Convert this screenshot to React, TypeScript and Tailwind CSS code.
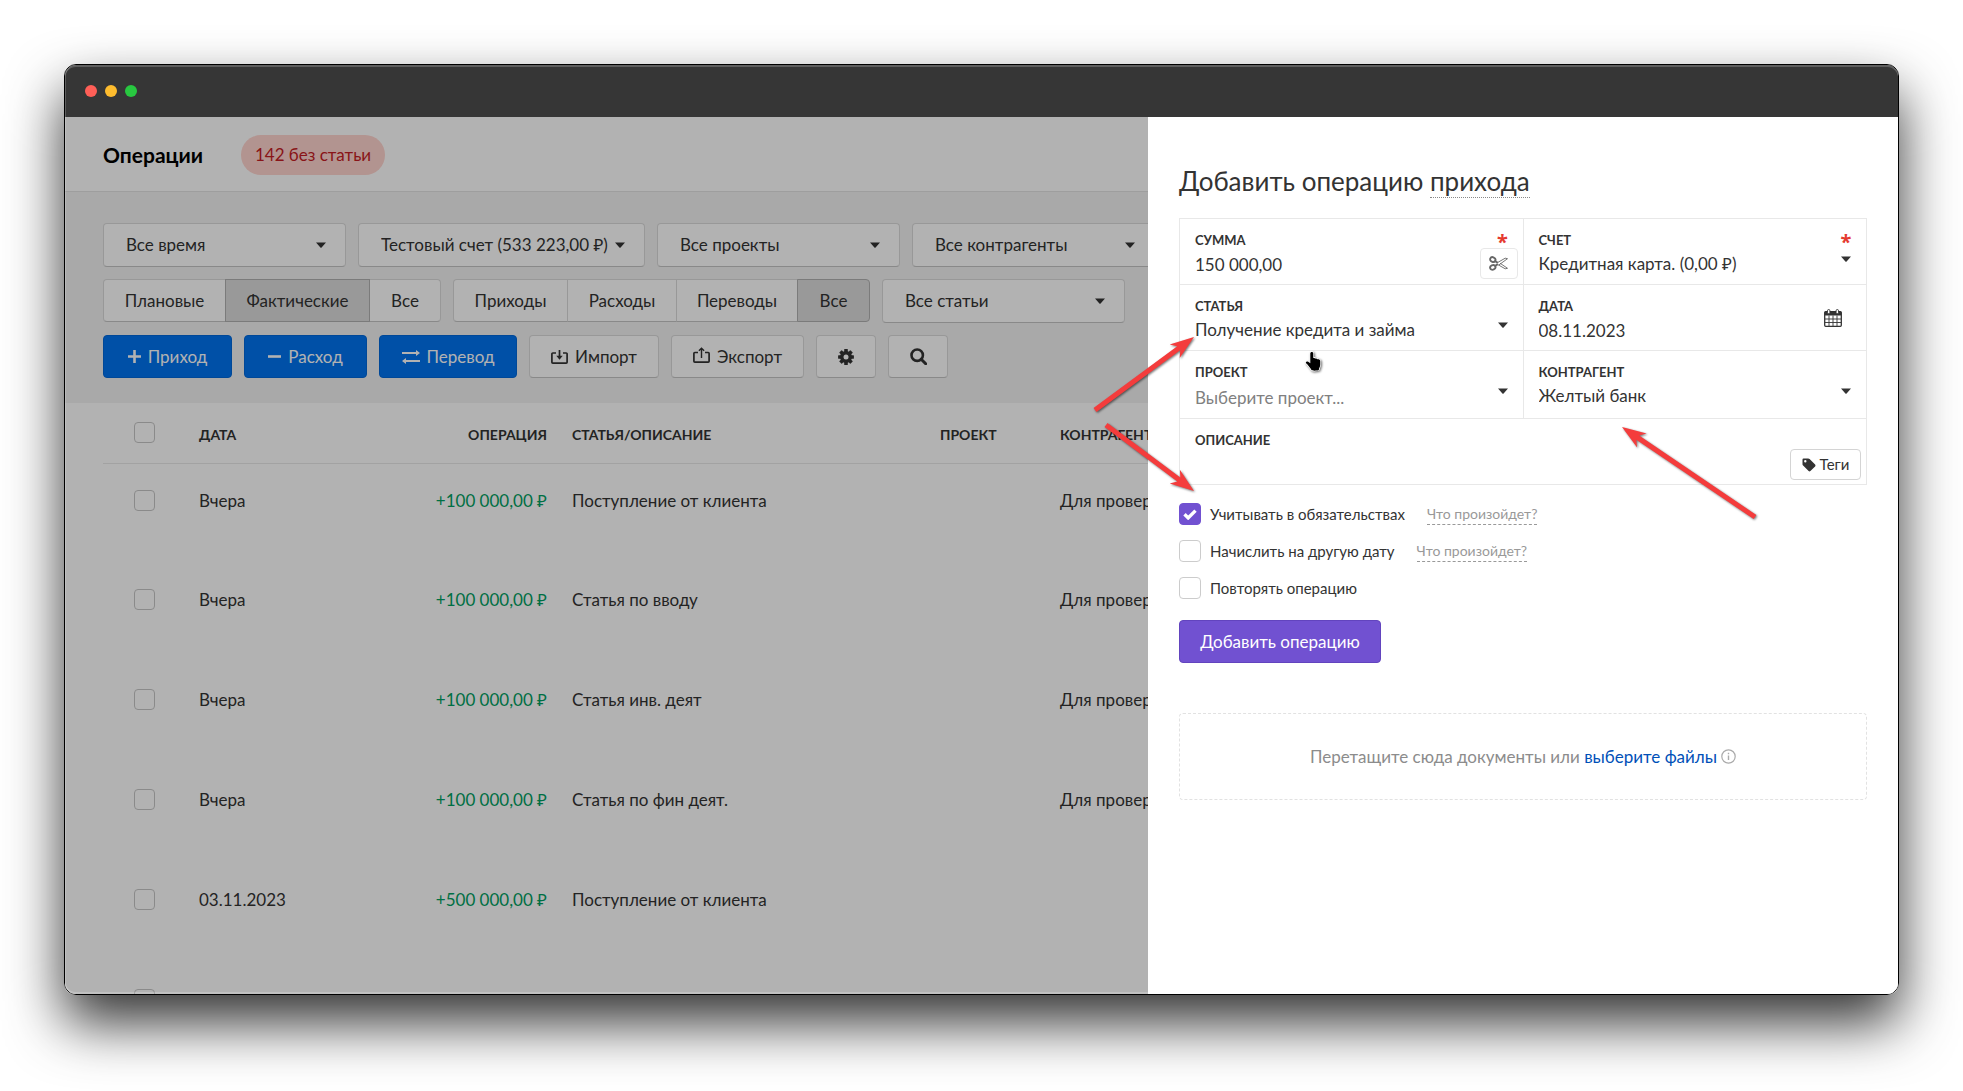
import type { ReactNode } from "react";

function Caret() {
  return (
    <svg width="10" height="6" viewBox="0 0 10 6" className="pointer-events-none shrink-0 text-[#333]" fill="currentColor" aria-hidden="true">
      <path d="M0 .5h10L5.6 5.4a.8.8 0 0 1-1.2 0z" />
    </svg>
  );
}

function FilterSelect({ label, value, width }: { label: string; value: string; width: string }) {
  return (
    <div className={"grid h-11 shrink-0 items-center rounded border border-[#dadada] border-b-[#c4c4c4] bg-white " + width}>
      <select aria-label={label} className="col-start-1 row-start-1 h-full w-full appearance-none bg-transparent pr-8 pl-[22px] outline-none">
        <option>{value}</option>
      </select>
      <span className="pointer-events-none col-start-1 row-start-1 mr-[19px] justify-self-end">
        <Caret />
      </span>
    </div>
  );
}

function Segments({ items, active }: { items: [string, string][]; active: string }) {
  return (
    <div className="flex h-[43px] shrink-0">
      {items.map(([text, width]) => (
        <button
          key={text}
          type="button"
          className={
            "-ml-px border text-center first:ml-0 first:rounded-l last:rounded-r " +
            width +
            (text === active ? " relative border-[#b0b0b0] bg-[#dcdcdc]" : " border-[#dadada] border-b-[#c4c4c4] bg-white")
          }
        >
          {text}
        </button>
      ))}
    </div>
  );
}

function ActionButton({ children, width, primary, label }: { children: ReactNode; width: string; primary?: boolean; label?: string }) {
  return (
    <button
      type="button"
      aria-label={label}
      className={
        "flex h-[43px] shrink-0 items-center justify-center gap-[7px] rounded border " +
        width +
        (primary ? " border-[#0067da] bg-[#0073f0] text-white" : " border-[#dadada] border-b-[#c4c4c4] bg-white")
      }
    >
      {children}
    </button>
  );
}

const stroke = { fill: "none", stroke: "currentColor" } as const;

function PlusIcon() {
  return (
    <svg width="13" height="13" viewBox="0 0 13 13" {...stroke} strokeWidth="2.600" aria-hidden="true">
      <path d="M6.500 0v13M0 6.500h13" />
    </svg>
  );
}
function MinusIcon() {
  return (
    <svg width="13" height="13" viewBox="0 0 13 13" {...stroke} strokeWidth="2.600" aria-hidden="true">
      <path d="M0 6.500h13" />
    </svg>
  );
}
function SwapIcon() {
  return (
    <svg width="18" height="14" viewBox="0 0 18 14" {...stroke} strokeWidth="2" aria-hidden="true">
      <path d="M0 3h15M3 11h15" />
      <path d="M14 0l4 3-4 3zM4 8l-4 3 4 3z" fill="currentColor" stroke="none" />
    </svg>
  );
}
function ImportIcon() {
  return (
    <svg width="17" height="14" viewBox="0 0 17 14" {...stroke} strokeWidth="1.700" aria-hidden="true">
      <path d="M5 3H1.800a.9.9 0 0 0-.9.900v8.300a.9.9 0 0 0 .9.900h13.400a.9.9 0 0 0 .9-.9V3.900a.9.9 0 0 0-.9-.9H12M8.500 0v7" />
      <path d="M5.300 5.800h6.400L8.500 9.800z" fill="currentColor" stroke="none" />
    </svg>
  );
}
function ExportIcon() {
  return (
    <svg width="17" height="16" viewBox="0 0 17 16" className="mb-1" {...stroke} strokeWidth="1.700" aria-hidden="true">
      <path d="M5 5.500H1.800a.9.9 0 0 0-.9.900v7.800a.9.9 0 0 0 .9.900h13.400a.9.9 0 0 0 .9-.9V6.400a.9.9 0 0 0-.9-.9H12" />
      <path strokeWidth="1.400" d="M8.500 11V1.500M5.900 3.800l2.600-2.600 2.600 2.600" />
    </svg>
  );
}
function GearIcon() {
  return (
    <svg width="16" height="16" viewBox="-8 -8 16 16" fill="currentColor" aria-hidden="true">
      {[0, 45, 90, 135].map((a) => (
        <rect key={a} x="-1.800" y="-7.900" width="3.600" height="15.800" rx=".5" transform={`rotate(${a})`} />
      ))}
      <circle r="6" />
      <circle r="2.500" fill="#fff" />
    </svg>
  );
}
function SearchIcon() {
  return (
    <svg width="17" height="17" viewBox="0 0 17 17" {...stroke} strokeWidth="2.600" aria-hidden="true">
      <circle cx="7.200" cy="7.200" r="5.700" />
      <path d="M11.200 11.200l4.500 4.500" strokeWidth="3" strokeLinecap="round" />
    </svg>
  );
}
function ScissorsIcon() {
  return (
    <svg width="19" height="15" viewBox="0 0 19 15" {...stroke} className="text-[#666]" aria-hidden="true">
      <ellipse cx="3.800" cy="3.600" rx="2.700" ry="2.300" strokeWidth="1.900" transform="rotate(25 3.800 3.600)" />
      <ellipse cx="3.800" cy="11.400" rx="2.700" ry="2.300" strokeWidth="1.900" transform="rotate(-25 3.800 11.400)" />
      <path strokeWidth="2" d="M6 5l2.800 1.800M6 10l2.800-1.800" />
      <path strokeWidth=".9" d="M8.500 6.600l7.700-4.400 2.300.5L9.800 9M8.500 8.400l7.700 4.400 2.300-.5L11 7.200" />
    </svg>
  );
}
function CalendarIcon() {
  return (
    <svg width="18" height="18" viewBox="0 0 18 18" className="text-[#333]" aria-hidden="true">
      <rect x=".7" y="2.700" width="16.600" height="14.600" rx="1" fill="#fff" stroke="currentColor" strokeWidth="1.300" />
      <rect x=".5" y="2.500" width="17" height="4" rx="1" fill="currentColor" />
      <path d="M5 6.500V17M9 6.500V17M13 6.500V17M1 10h16M1 13.500h16" stroke="currentColor" strokeWidth=".9" />
      <rect x="3.500" y=".5" width="2.400" height="4.200" rx="1.200" fill="#fff" stroke="currentColor" strokeWidth=".9" />
      <rect x="12.100" y=".5" width="2.400" height="4.200" rx="1.200" fill="#fff" stroke="currentColor" strokeWidth=".9" />
    </svg>
  );
}
function TagIcon() {
  return (
    <svg width="14" height="14" viewBox="0 0 14 14" fill="currentColor" aria-hidden="true">
      <path fillRule="evenodd" d="M.5 1.500A1 1 0 0 1 1.500.5h4.700c.6 0 1 .2 1.400.6l5.500 5.500c.5.500.5 1.300 0 1.800l-4.700 4.700c-.5.5-1.300.5-1.800 0L1.100 7.600C.7 7.200.5 6.800.5 6.200zM3.300 2.100a1.200 1.200 0 1 0 0 2.400 1.200 1.200 0 0 0 0-2.400z" />
    </svg>
  );
}
function InfoIcon() {
  return (
    <svg width="15" height="15" viewBox="0 0 15 15" {...stroke} className="text-[#aaa]" aria-hidden="true">
      <circle cx="7.500" cy="7.500" r="6.700" strokeWidth="1.200" />
      <path d="M7.500 6.500v4.500M7.500 3.800v1.400" strokeWidth="1.400" />
    </svg>
  );
}

type Row = { date: string; amount: string; article: string; party: string };
const rows: Row[] = [
  { date: "Вчера", amount: "+100 000,00 ₽", article: "Поступление от клиента", party: "Для проверки" },
  { date: "Вчера", amount: "+100 000,00 ₽", article: "Статья по вводу", party: "Для проверки" },
  { date: "Вчера", amount: "+100 000,00 ₽", article: "Статья инв. деят", party: "Для проверки" },
  { date: "Вчера", amount: "+100 000,00 ₽", article: "Статья по фин деят.", party: "Для проверки" },
  { date: "03.11.2023", amount: "+500 000,00 ₽", article: "Поступление от клиента", party: "" },
  { date: "", amount: "", article: "", party: "" },
];

function RowCheck({ label }: { label: string }) {
  return <input type="checkbox" aria-label={label} className="block size-[21px] appearance-none rounded border border-[#c6c6c6] bg-white" />;
}

function Operations() {
  return (
    <main className="h-full w-full overflow-hidden bg-white">
      <header className="flex h-[75px] items-center gap-[38px] border-b border-[#e2e2e2] pt-px pl-[38px]">
        <h1 className="text-[21px] font-bold text-black">Операции</h1>
        <button type="button" className="h-10 w-36 rounded-full bg-[#ffd4ce] text-[#c51d24]">
          142 без статьи
        </button>
      </header>
      <section className="flex h-[211px] flex-col gap-3 bg-[#f2f2f2] pt-[31px] pl-[38px]">
        <div className="flex gap-3">
          <FilterSelect label="Период" value="Все время" width="w-[243px]" />
          <FilterSelect label="Счет" value="Тестовый счет (533 223,00 ₽)" width="w-[287px]" />
          <FilterSelect label="Проекты" value="Все проекты" width="w-[243px]" />
          <FilterSelect label="Контрагенты" value="Все контрагенты" width="w-[243px]" />
        </div>
        <div className="flex gap-3">
          <Segments active="Фактические" items={[["Плановые", "w-[123px]"], ["Фактические", "w-[145px]"], ["Все", "w-[72px]"]]} />
          <Segments active="Все" items={[["Приходы", "w-[115px]"], ["Расходы", "w-[110px]"], ["Переводы", "w-[122px]"], ["Все", "w-[73px]"]]} />
          <FilterSelect label="Статьи" value="Все статьи" width="w-[243px]" />
        </div>
        <div className="flex gap-3">
          <ActionButton primary width="w-[129px]"><PlusIcon />Приход</ActionButton>
          <ActionButton primary width="w-[123px]"><MinusIcon />Расход</ActionButton>
          <ActionButton primary width="w-[138px]"><SwapIcon />Перевод</ActionButton>
          <ActionButton width="w-[130px]"><ImportIcon />Импорт</ActionButton>
          <ActionButton width="w-[133px]"><ExportIcon />Экспорт</ActionButton>
          <ActionButton width="w-[60px]" label="Настройки"><GearIcon /></ActionButton>
          <ActionButton width="w-[60px]" label="Поиск"><SearchIcon /></ActionButton>
        </div>
      </section>
      <div className="pl-[38px]">
        <table className="w-full table-fixed text-left">
          <colgroup>
            <col className="w-24" />
            <col className="w-[150px]" />
            <col className="w-[198px]" />
            <col className="w-[393px]" />
            <col className="w-[120px]" />
            <col />
          </colgroup>
          <thead>
            <tr className="h-[60px] border-b border-[#e8e8e8] align-middle text-sm font-bold whitespace-nowrap">
              <th className="pl-[31px]"><RowCheck label="Выбрать все" /></th>
              <th className="pt-1">ДАТА</th>
              <th className="pt-1 text-right">ОПЕРАЦИЯ</th>
              <th className="pt-1 pl-[25px]">СТАТЬЯ/ОПИСАНИЕ</th>
              <th className="pt-1">ПРОЕКТ</th>
              <th className="pt-1">КОНТРАГЕНТ</th>
            </tr>
          </thead>
          <tbody>
            {rows.map((r, i) => (
              <tr key={i} className="h-[100px] align-top leading-6">
                <td className="pt-[26px] pl-[31px]"><RowCheck label={"Операция " + (i + 1)} /></td>
                <td className="pt-[25px]">{r.date}</td>
                <td className="pt-[25px] text-right text-[#00a062]">{r.amount}</td>
                <td className="pt-[25px] pl-[25px]">{r.article}</td>
                <td />
                <td className="pt-[25px] whitespace-nowrap">{r.party}</td>
              </tr>
            ))}
          </tbody>
        </table>
      </div>
    </main>
  );
}

const cell = "grid grid-cols-[1fr_auto] items-start border-[#e8e8e8] pl-[15px] ";
const fieldLabel = "text-[13px] leading-5 font-bold";
const fieldInput = "h-7 w-full min-w-0 appearance-none bg-transparent outline-none";

function Star() {
  return <span className="font-['Noto_Sans'] text-xl leading-5 font-bold text-[#e53a2f]">*</span>;
}

function SelectField({ id, label, value, required, muted, side }: { id: string; label: string; value: string; required?: boolean; muted?: boolean; side: string }) {
  return (
    <div className={cell + side}>
      <div className="pt-[11px]">
        <label htmlFor={id} className={"block " + fieldLabel}>{label}</label>
        <select id={id} className={fieldInput + (muted ? " mt-[2px] text-[#808080]" : "")}>
          <option>{value}</option>
        </select>
      </div>
      <div className="mr-[14px] flex h-full w-3 flex-col items-center pt-[11px]">
        <span className="h-[26px]">{required && <Star />}</span>
        <Caret />
      </div>
    </div>
  );
}

function OptionRow({ id, text, checked, help }: { id: string; text: string; checked?: boolean; help?: boolean }) {
  return (
    <div className="flex h-[22px] items-center text-[15px]">
      <span className="grid size-[22px] place-items-center">
        <input id={id} type="checkbox" defaultChecked={checked} className="peer col-start-1 row-start-1 size-[22px] appearance-none rounded border border-[#ccc] bg-white checked:border-[#7151d1] checked:bg-[#7151d1]" />
        <svg width="14" height="11" viewBox="0 0 14 11" className="pointer-events-none invisible col-start-1 row-start-1 peer-checked:visible" fill="none" stroke="#fff" strokeWidth="3.400" aria-hidden="true">
          <path d="M1.500 5.200l3.700 3.700L12.500 1.600" />
        </svg>
      </span>
      <label htmlFor={id} className="ml-[9px]">{text}</label>
      {help && (
        <a href="#help" className="ml-[22px] border-b border-dashed border-[#999] text-sm leading-[20px] text-[#999]">Что произойдет?</a>
      )}
    </div>
  );
}

function Arrow({ x1, y1, x2, y2 }: { x1: number; y1: number; x2: number; y2: number }) {
  const len = Math.hypot(x2 - x1, y2 - y1);
  const deg = (Math.atan2(y2 - y1, x2 - x1) * 180) / Math.PI;
  return (
    <path
      transform={`translate(${x1} ${y1}) rotate(${deg})`}
      d={`M0-2.500H${len - 19}L${len - 24}-8.500L${len} 0L${len - 24} 8.500L${len - 19} 2.500H0z`}
      fill="#f43c3c"
    />
  );
}

function Marks() {
  return (
    <svg width="750" height="450" viewBox="0 0 750 450" className="pointer-events-none absolute top-0 left-0 overflow-visible drop-shadow-[1px_1px_1px_rgba(0,0,0,0.55)]" aria-hidden="true">
      <Arrow x1={-53} y1={293} x2={46} y2={220} />
      <Arrow x1={-42} y1={308} x2={46} y2={374} />
      <Arrow x1={607} y1={400} x2={474} y2={310} />
      <path
        transform="translate(158 235)"
        stroke="#fff"
        strokeWidth="1.500"
        paintOrder="stroke"
        d="M4.300 1.500C4.300.5 5 0 5.800 0S7.300.5 7.300 1.500V6c.8-.3 1.800 0 2.100.6.900-.2 1.700 0 2 .7 1.600-.1 2.900.5 2.900 1.900v3.300c0 2-1.300 3.200-1.500 5.500-.1.600-6.800 1-7.300.1C5 16.600 3.500 15.500 2.600 14 1.700 12.600.7 12 0 11c-.6-.9.500-1.900 1.700-1.400.9.300 1.700 1 2.600 1.700z"
        fill="#000"
      />
    </svg>
  );
}

function Drawer() {
  return (
    <aside role="dialog" aria-labelledby="drawer-title" className="absolute inset-y-0 right-0 w-[750px] bg-white px-[31px] pt-[46px]">
      <h2 id="drawer-title" className="text-[26px] leading-9">
        Добавить операцию{" "}
        <a href="#type" className="border-b border-dotted border-[#888]">прихода</a>
      </h2>
      <form className="mt-[19px]">
        <div className="grid grid-cols-2 grid-rows-[66px_66px_68px_66px] border-t border-l border-[#e8e8e8]">
          <div className={cell + "border-r border-b"}>
            <div className="pt-[11px]">
              <label htmlFor="sum" className={"block " + fieldLabel}>СУММА</label>
              <input id="sum" type="text" defaultValue="150 000,00" className={fieldInput} />
            </div>
            <div className="mr-[5px] flex h-full flex-col items-center pt-[11px]">
              <span className="ml-2 h-[18px]"><Star /></span>
              <button type="button" aria-label="Разделить сумму" className="grid h-[31px] w-[38px] place-items-center rounded border border-[#e8e8e8] bg-white">
                <ScissorsIcon />
              </button>
            </div>
          </div>
          <SelectField id="account" label="СЧЕТ" value="Кредитная карта. (0,00 ₽)" required side="border-r border-b" />
          <SelectField id="article" label="СТАТЬЯ" value="Получение кредита и займа" side="border-r border-b" />
          <div className={cell + "border-r border-b"}>
            <div className="pt-[11px]">
              <label htmlFor="date" className={"block " + fieldLabel}>ДАТА</label>
              <input id="date" type="text" defaultValue="08.11.2023" className={fieldInput} />
            </div>
            <button type="button" aria-label="Открыть календарь" className="mr-6 self-center"><CalendarIcon /></button>
          </div>
          <SelectField id="project" label="ПРОЕКТ" value="Выберите проект..." muted side="border-r border-b" />
          <SelectField id="party" label="КОНТРАГЕНТ" value="Желтый банк" side="border-r border-b" />
          <div className={cell + "col-span-2 border-r border-b"}>
            <div className="pt-[11px]">
              <label htmlFor="note" className={"block " + fieldLabel}>ОПИСАНИЕ</label>
              <input id="note" type="text" className={fieldInput} />
            </div>
            <button type="button" className="mr-[5px] mb-1 flex h-[31px] w-[71px] items-center justify-center gap-1 self-end rounded border border-[#d4d4d4] text-[15px]">
              <TagIcon />
              Теги
            </button>
          </div>
        </div>
        <div className="mt-[18px] flex flex-col gap-[15px]">
          <OptionRow id="debts" text="Учитывать в обязательствах" checked help />
          <OptionRow id="accrue" text="Начислить на другую дату" help />
          <OptionRow id="repeat" text="Повторять операцию" />
        </div>
        <button type="button" className="mt-[21px] h-[43px] w-[202px] rounded border border-[#6244be] bg-[#7151d1] text-white">
          Добавить операцию
        </button>
        <div className="mt-[50px] flex h-[87px] items-center justify-center gap-1 rounded border border-dashed border-[#e2e2e2] text-[#8c8c8c]">
          <span>
            Перетащите сюда документы или{" "}
            <a href="#files" className="text-[#0050b8]">выберите файлы</a>
          </span>
          <InfoIcon />
        </div>
      </form>
      <Marks />
    </aside>
  );
}

export default function App() {
  return (
    <div className="h-screen bg-white px-16 pt-16 pb-24 font-['Lato','Noto_Sans',sans-serif] text-[17px] text-[#333]">
      <div className="relative flex h-full flex-col overflow-hidden rounded-xl border border-black shadow-[0_28px_56px_rgba(0,0,0,0.8)]">
        <div className="flex h-[52px] shrink-0 items-center gap-2 bg-[#363636] pl-5">
          <span className="size-3 rounded-full bg-[#ff5f57]" />
          <span className="size-3 rounded-full bg-[#febc2e]" />
          <span className="size-3 rounded-full bg-[#28c840]" />
        </div>
        <div className="relative min-h-0 flex-1">
          <Operations />
          <div className="absolute inset-0 bg-black/30" />
          <Drawer />
        </div>
        <div className="pointer-events-none absolute inset-0 rounded-[11px] shadow-[inset_0_2px_0_rgba(255,255,255,0.2),inset_0_-2px_0_rgba(255,255,255,0.2),inset_1px_0_0_rgba(255,255,255,0.2)]" />
      </div>
    </div>
  );
}
